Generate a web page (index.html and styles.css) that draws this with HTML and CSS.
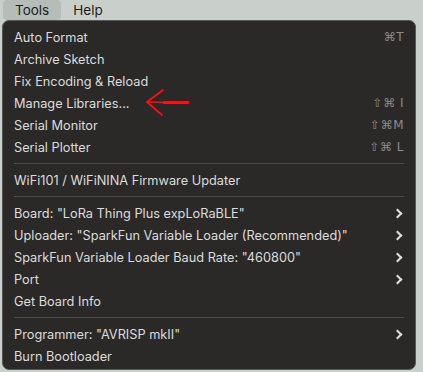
FILE: index.html
```html
<!DOCTYPE html>
<html lang="en">
<head>
    <meta charset="UTF-8">
    <title>Tools menu</title>
    <link rel="stylesheet" href="styles.css">
</head>
<body>
    <div class="menubar">
        <span class="menubar-item active">Tools</span>
        <span class="menubar-item">Help</span>
    </div>

    <div class="dropdown">
        <div class="item"><span>Auto Format</span><span class="shortcut">⌘T</span></div>
        <div class="item"><span>Archive Sketch</span></div>
        <div class="item"><span>Fix Encoding &amp; Reload</span></div>
        <div class="item"><span>Manage Libraries...</span><span class="shortcut">⇧⌘ I</span></div>
        <div class="item"><span>Serial Monitor</span><span class="shortcut">⇧⌘M</span></div>
        <div class="item"><span>Serial Plotter</span><span class="shortcut">⇧⌘ L</span></div>
        <div class="separator"></div>
        <div class="item"><span>WiFi101 / WiFiNINA Firmware Updater</span></div>
        <div class="separator"></div>
        <div class="item"><span>Board: "LoRa Thing Plus expLoRaBLE"</span><span class="chevron"></span></div>
        <div class="item"><span>Uploader: "SparkFun Variable Loader (Recommended)"</span><span class="chevron"></span></div>
        <div class="item"><span>SparkFun Variable Loader Baud Rate: "460800"</span><span class="chevron"></span></div>
        <div class="item"><span>Port</span><span class="chevron"></span></div>
        <div class="item"><span>Get Board Info</span></div>
        <div class="separator"></div>
        <div class="item"><span>Programmer: "AVRISP mkII"</span><span class="chevron"></span></div>
        <div class="item"><span>Burn Bootloader</span></div>

        <!-- hand drawn pointer -->
        <svg class="annotation" width="50" height="30" viewBox="0 0 50 30">
            <path d="M19 2 L3 14 L18 27" fill="none" stroke="#ff1010" stroke-width="1.7" stroke-linecap="round" stroke-linejoin="round"/>
            <path d="M3 14 L22 14.5" fill="none" stroke="#ff1010" stroke-width="1.7" stroke-linecap="round"/>
            <path d="M20 14.5 L44 14.5" fill="none" stroke="#ff1010" stroke-width="3" stroke-linecap="round"/>
        </svg>
    </div>
</body>
</html>
```

FILE: styles.css
```css
html, body {
    margin: 0;
    padding: 0;
}
body {
    background: #c9d0cc;
    font-family: "Inter", "Liberation Sans", sans-serif;
    font-size: 12.75px;
    height: 372px;
    overflow: hidden;
}
.menubar {
    display: flex;
    height: 20px;
    align-items: center;
    padding-left: 3px;
    color: #1c1c1c;
    font-size: 13.5px;
}
.menubar-item {
    padding: 0 12px;
    line-height: 20px;
    border-radius: 4px;
}
.menubar-item.active {
    background: #b6bdb9;
}
.dropdown {
    position: relative;
    margin-left: 2px;
    width: 414px;
    height: 350px;
    box-sizing: border-box;
    padding: 5px 0 4px;
    background: #2a2928;
    border: 1px solid #585858;
    border-radius: 7px;
    color: #dcdcdc;
}
.item {
    display: flex;
    align-items: center;
    justify-content: space-between;
    height: 22px;
    padding: 0 11px 0 11px;
}
.shortcut {
    color: #8c8c8c;
    letter-spacing: 0.5px;
    font-family: "DejaVu Sans", sans-serif;
    font-size: 12px;
}
.chevron {
    width: 5px;
    height: 5px;
    margin-right: 3px;
    border-top: 2px solid #e0e0e0;
    border-right: 2px solid #e0e0e0;
    transform: rotate(45deg);
}
.separator {
    height: 1px;
    margin: 5px 11px;
    background: #4b4b4b;
}
.annotation {
    position: absolute;
    left: 141px;
    top: 67px;
}
```
